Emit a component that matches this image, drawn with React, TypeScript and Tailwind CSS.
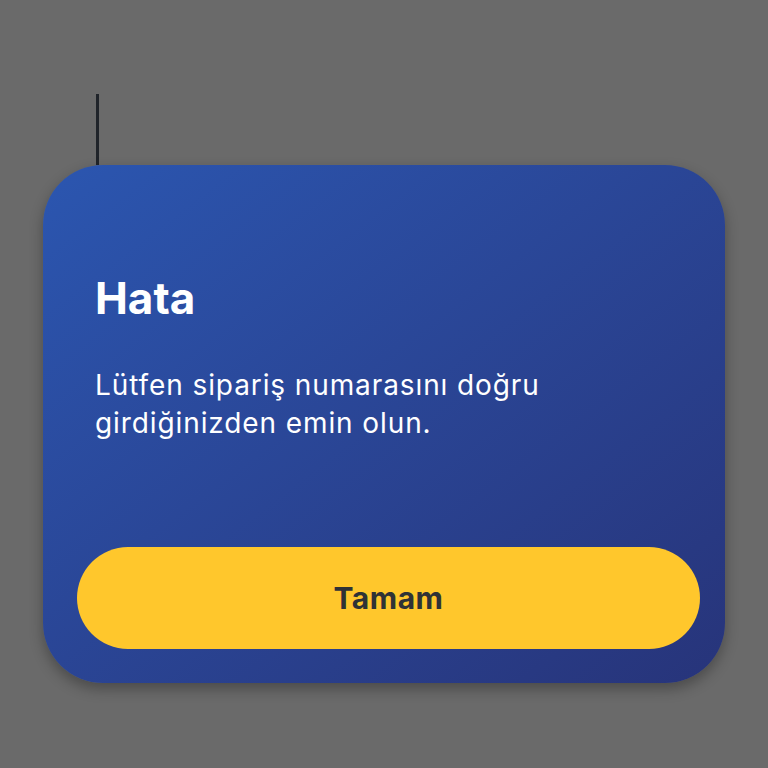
export default function App() {
  return (
    <div className="min-h-screen w-full bg-[#6a6a6a] font-['Inter','Noto_Sans',sans-serif]">
      {/* thin marker above the dialog */}
      <div className="ml-[96px] h-[165px] pt-[94px]">
        <div className="h-[71px] w-[3px] bg-[#20242a]" />
      </div>

      {/* Error dialog */}
      <div className="ml-[43px] flex h-[518px] w-[682px] flex-col rounded-[60px] bg-linear-to-br from-[#2b56b0] to-[#27347a] shadow-[0_6px_14px_rgba(0,0,0,0.3)]">
        <div className="px-[52px] pt-[107px]">
          <h1 className="text-[44px] leading-[52px] font-bold text-white">Hata</h1>
          <p className="mt-[42px] text-[28px] leading-[38px] tracking-[0.9px] text-white">
            Lütfen sipariş numarasını doğru
            <br />
            girdiğinizden emin olun.
          </p>
        </div>
        <button className="mt-auto mb-[34px] ml-[34px] h-[102px] w-[623px] rounded-full bg-[#ffc72c] text-[30px] font-bold tracking-[0.5px] text-[#2f3236]">
          Tamam
        </button>
      </div>
    </div>
  );
}
